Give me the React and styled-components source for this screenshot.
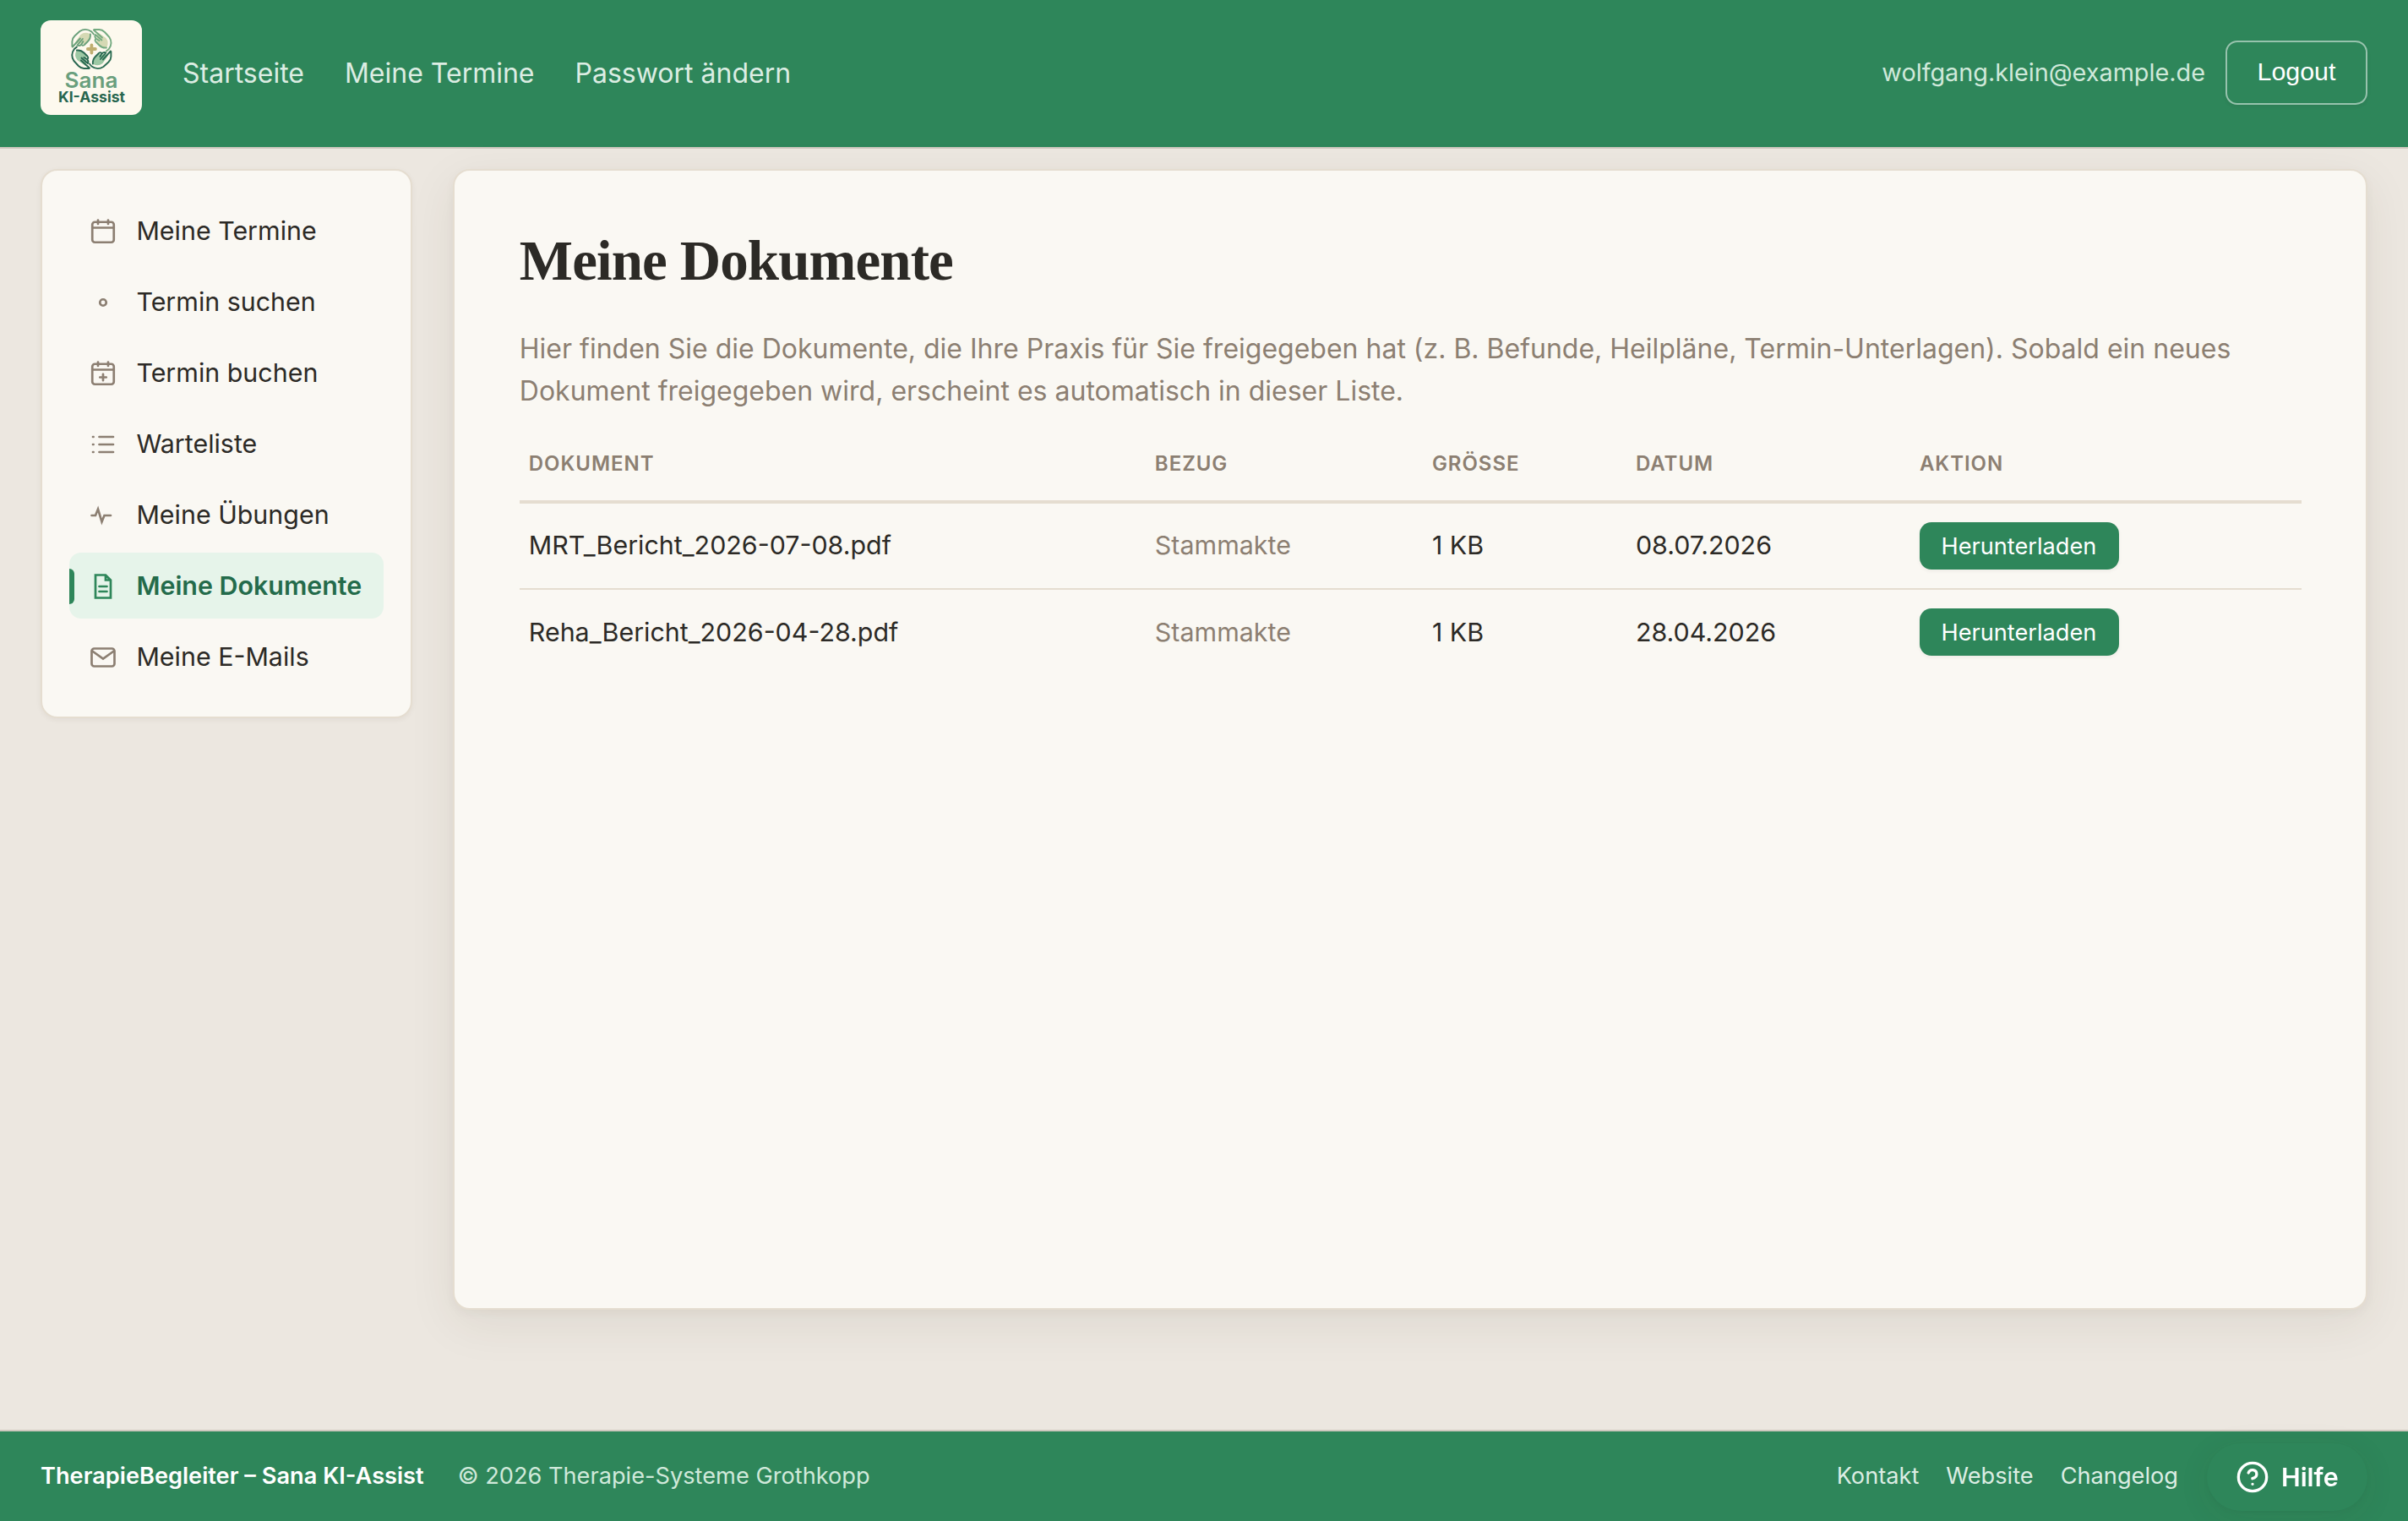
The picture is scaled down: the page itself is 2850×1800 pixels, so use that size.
import React from 'react';
import styled, { createGlobalStyle, css } from 'styled-components';

const GlobalStyle = createGlobalStyle`
  *, *::before, *::after { box-sizing: border-box; }
  body {
    margin: 0;
    background: #ece7e0;
    color: #2c2a26;
    font-family: Inter, sans-serif;
    font-size: 32px;
  }
  a { color: inherit; text-decoration: none; }
  button { font-family: inherit; margin: 0; }
`;

const Page = styled.div`
  display: flex;
  flex-direction: column;
  height: 1800px;
  overflow: hidden;
`;

const Header = styled.header`
  flex: none;
  display: flex;
  align-items: flex-start;
  justify-content: space-between;
  height: 176px;
  padding: 24px 48px 0;
  background: #2e865a;
  border-bottom: 2px solid #cfc8bf;
`;

const HeaderGroup = styled.div`
  display: flex;
  align-items: center;
  height: 124px;
  gap: ${(p) => p.$gap}px;
`;

const LogoLink = styled.a`
  align-self: flex-start;
  display: block;
  width: 120px;
  height: 112px;
  border-radius: 12px;
  overflow: hidden;
  background: #fdf9ee;
  svg { display: block; }
`;

const NavLink = styled.a`
  padding-top: 2px;
  font-size: 32px;
  line-height: 50px;
  color: #dcede3;
`;

const Email = styled.span`
  font-size: 28.8px;
  line-height: 46px;
  color: #d0e9da;
`;

const LogoutButton = styled.button`
  width: 168px;
  height: 76px;
  padding: 0 0 3px;
  border: 2px solid rgba(255, 255, 255, 0.5);
  border-radius: 14px;
  background: transparent;
  box-shadow: 0 2px 4px rgba(44, 42, 38, 0.08);
  color: #fff;
  font-family: 'Liberation Sans', Arial, sans-serif;
  font-size: 30.4px;
`;

const Body = styled.div`
  flex: 1;
  display: flex;
  align-items: flex-start;
  gap: 48px;
  padding: 24px 48px 0;
`;

const panel = css`
  border: 2px solid #e5ddd0;
  border-radius: 20px;
  background: #faf8f3;
`;

const Sidebar = styled.nav`
  ${panel}
  flex: none;
  display: flex;
  flex-direction: column;
  gap: 6px;
  width: 440px;
  padding: 32px;
  box-shadow: 0 2px 6px rgba(60, 50, 30, 0.06);
`;

const SideItem = styled.a`
  position: relative;
  display: flex;
  align-items: center;
  gap: 21.4px;
  height: 78px;
  padding-left: 22px;
  border-radius: 14px;
  font-size: 30.4px;
  white-space: nowrap;
  color: ${(p) => (p.$active ? '#246b4b' : '#2c2a26')};
  font-weight: ${(p) => (p.$active ? 600 : 400)};
  background: ${(p) => (p.$active ? '#e6f4ea' : 'transparent')};
  svg {
    flex: none;
    margin-top: 2px;
    color: ${(p) => (p.$active ? '#2e865a' : '#8c7f72')};
  }
  &::before {
    content: '';
    display: ${(p) => (p.$active ? 'block' : 'none')};
    position: absolute;
    left: 0;
    top: 18.5px;
    width: 6px;
    height: 42px;
    border-radius: 0 6px 6px 0;
    background: #2e865a;
  }
`;

const Main = styled.main`
  ${panel}
  flex: 1;
  height: 1350px;
  padding: 68px 76px 0 76.8px;
  box-shadow: 0 16px 56px rgba(60, 50, 30, 0.08), 0 4px 12px rgba(60, 50, 30, 0.04);
`;

const Title = styled.h1`
  margin: 0;
  font-family: 'Liberation Serif', serif;
  font-size: 67px;
  font-weight: 700;
  line-height: 76px;
  letter-spacing: -0.9px;
  color: #2c2a26;
`;

const Intro = styled.p`
  margin: 42px 0 0;
  font-size: 32px;
  line-height: 50px;
  color: #8c7f72;
`;

const Table = styled.table`
  width: 100%;
  margin-top: 10px;
  table-layout: fixed;
  border-collapse: separate;
  border-spacing: 0;
`;

const Col = styled.col`
  width: ${(p) => p.$w}px;
`;

const Th = styled.th`
  height: 98px;
  padding: 7px 11px 0;
  border-bottom: 4px solid #e5ddd0;
  text-align: left;
  font-size: 24px;
  font-weight: 600;
  letter-spacing: 0.96px;
  color: #8c7f72;
`;

const Td = styled.td`
  height: 102px;
  padding: 0 11px ${(p) => (p.$last || p.$action ? 0 : 2)}px;
  border-bottom: 2px solid ${(p) => (p.$last ? 'transparent' : '#e5ddd0')};
  font-size: 30.4px;
  line-height: 48px;
  color: ${(p) => (p.$muted ? '#8c7f72' : '#2c2a26')};
`;

const DownloadButton = styled.button`
  display: flex;
  align-items: center;
  justify-content: center;
  width: 236px;
  height: 56px;
  padding: 0 1px 0 0;
  border: 0;
  border-radius: 14px;
  background: #2e865a;
  box-shadow: 0 2px 4px rgba(44, 42, 38, 0.06);
  color: #fff;
  font-size: 27.2px;
`;

const Footer = styled.footer`
  flex: none;
  display: flex;
  align-items: center;
  justify-content: space-between;
  height: 108px;
  padding: 0 272px 2px 48px;
  border-top: 2px solid #cfc8bf;
  background: #2e865a;
  color: #d0e9da;
  font-size: 27.2px;
`;

const FooterGroup = styled.div`
  display: flex;
  gap: ${(p) => p.$gap}px;
`;

const FooterLink = styled.a`
  color: #dcede3;
`;

const Brand = styled.strong`
  font-weight: 600;
  color: #fff;
`;

const HelpButton = styled.button`
  position: fixed;
  right: 48px;
  bottom: 12px;
  display: flex;
  align-items: center;
  gap: 14px;
  width: 190px;
  height: 80px;
  padding: 0 0 0 34px;
  border: 0;
  border-radius: 40px;
  background: #2e865a;
  box-shadow: 0 8px 40px rgba(60, 50, 30, 0.07), 0 2px 8px rgba(60, 50, 30, 0.05);
  color: #fff;
  font-size: 30.4px;
  font-weight: 600;
`;

const icons = {
  calendar: (
    <>
      <rect x="3.5" y="4.5" width="17" height="16" rx="2" />
      <path d="M3.5 9h17M8 3v3M16 3v3" />
    </>
  ),
  dot: <circle cx="12" cy="12" r="2.5" />,
  calendarPlus: (
    <>
      <rect x="3.5" y="4.5" width="17" height="16" rx="2" />
      <path d="M3.5 9h17M8 3v3M16 3v3M12 12.5v5M9.5 15h5" />
    </>
  ),
  list: <path d="M9 6h11M9 12h11M9 18h11M4 6h.4M4 12h.4M4 18h.4" />,
  pulse: <path d="M3 12h3l2-5 3 10 2-5h5" />,
  file: <path d="M6 3h8l4 4v14H6zM14 3v4h4M9 12h6M9 16h6" />,
  mail: (
    <>
      <rect x="3" y="5" width="18" height="14" rx="2" />
      <path d="M3.5 7l8.5 6 8.5-6" />
    </>
  ),
};

function Icon({ name }) {
  const round = name !== 'file' && name !== 'pulse' && name !== 'mail';
  return (
    <svg
      width="36"
      height="36"
      viewBox="0 0 24 24"
      fill="none"
      stroke="currentColor"
      strokeWidth="1.8"
      strokeLinecap="round"
      strokeLinejoin={round ? 'round' : 'miter'}
    >
      {icons[name]}
    </svg>
  );
}

function Hand({ angle, fill, stroke }) {
  return (
    <g transform={`rotate(${angle})`}>
      <path d="M-20 -7 L-13 -17 Q-8 -21 -2 -18 L-2.500 -11 L-8 -5.500 L-11.500 -7 L-14 -6 Z" fill={fill} />
      <path
        d="M-23 -3 V-9 Q-23 -12.500 -20 -15.500 L-14 -21 Q-7 -25.500 0 -20.500 L2.500 -17.500 M-1.500 -17.500 Q-1 -12.500 -4.500 -9 L-8.500 -5 Q-11 -3 -12 -5.500 L-10 -9 M-12 -5.500 Q-14.500 -3 -17 -4.500 L-10.500 -12 M-22.500 -2.500 L-13.500 -12.500"
        fill="none"
        stroke={stroke}
        strokeWidth="1.900"
        strokeLinecap="round"
        strokeLinejoin="round"
      />
    </g>
  );
}

function Logo() {
  return (
    <svg width="120" height="112" viewBox="0 0 120 112">
      <g transform="translate(60.400 34)">
        <Hand angle={0} fill="#d5d9b4" stroke="#6aa07a" />
        <Hand angle={90} fill="#d5d9b4" stroke="#74aa80" />
        <Hand angle={180} fill="#9cc8a4" stroke="#2b6c52" />
        <Hand angle={270} fill="#9cc8a4" stroke="#27664f" />
        <path d="M0 -4.500v9M-4.500 0h9" stroke="#bfae70" strokeWidth="3.800" strokeLinecap="round" />
      </g>
      <text
        x="60"
        y="80"
        textAnchor="middle"
        textLength="63"
        lengthAdjust="spacingAndGlyphs"
        fontFamily="Inter, sans-serif"
        fontSize="25"
        fontWeight="600"
        fill="#6a9f7d"
      >
        Sana
      </text>
      <text
        x="60.500"
        y="97"
        textAnchor="middle"
        textLength="79"
        lengthAdjust="spacingAndGlyphs"
        fontFamily="Inter, sans-serif"
        fontSize="18"
        fontWeight="700"
        fill="#27664f"
      >
        KI-Assist
      </text>
    </svg>
  );
}

const sideItems = [
  ['calendar', 'Meine Termine'],
  ['dot', 'Termin suchen'],
  ['calendarPlus', 'Termin buchen'],
  ['list', 'Warteliste'],
  ['pulse', 'Meine Übungen'],
  ['file', 'Meine Dokumente'],
  ['mail', 'Meine E-Mails'],
];

const columns = [
  ['DOKUMENT', 741],
  ['BEZUG', 328],
  ['GRÖSSE', 241],
  ['DATUM', 336],
  ['AKTION', 463],
];

const documents = [
  { name: 'MRT_Bericht_2026-07-08.pdf', ref: 'Stammakte', size: '1 KB', date: '08.07.2026' },
  { name: 'Reha_Bericht_2026-04-28.pdf', ref: 'Stammakte', size: '1 KB', date: '28.04.2026' },
];

export default function App() {
  return (
    <Page>
      <GlobalStyle />
      <Header>
        <HeaderGroup $gap={48}>
          <LogoLink href="#"><Logo /></LogoLink>
          <NavLink href="#">Startseite</NavLink>
          <NavLink href="#">Meine Termine</NavLink>
          <NavLink href="#">Passwort ändern</NavLink>
        </HeaderGroup>
        <HeaderGroup $gap={24}>
          <Email>wolfgang.klein@example.de</Email>
          <LogoutButton>Logout</LogoutButton>
        </HeaderGroup>
      </Header>
      <Body>
        <Sidebar>
          {sideItems.map(([icon, label]) => (
            <SideItem key={label} href="#" $active={icon === 'file'}>
              <Icon name={icon} />
              {label}
            </SideItem>
          ))}
        </Sidebar>
        <Main>
          <Title>Meine Dokumente</Title>
          <Intro>
            Hier finden Sie die Dokumente, die Ihre Praxis für Sie freigegeben hat (z. B. Befunde,
            Heilpläne, Termin-Unterlagen). Sobald ein neues Dokument freigegeben wird, erscheint es
            automatisch in dieser Liste.
          </Intro>
          <Table>
            <colgroup>
              {columns.map(([label, w]) => <Col key={label} $w={w} />)}
            </colgroup>
            <thead>
              <tr>{columns.map(([label]) => <Th key={label}>{label}</Th>)}</tr>
            </thead>
            <tbody>
              {documents.map((d, i) => {
                const last = i === documents.length - 1;
                return (
                  <tr key={d.name}>
                    <Td $last={last}>{d.name}</Td>
                    <Td $last={last} $muted>{d.ref}</Td>
                    <Td $last={last}>{d.size}</Td>
                    <Td $last={last}>{d.date}</Td>
                    <Td $last={last} $action><DownloadButton>Herunterladen</DownloadButton></Td>
                  </tr>
                );
              })}
            </tbody>
          </Table>
        </Main>
      </Body>
      <Footer>
        <FooterGroup $gap={40}>
          <Brand>TherapieBegleiter – Sana KI-Assist</Brand>
          <span>© 2026 Therapie-Systeme Grothkopp</span>
        </FooterGroup>
        <FooterGroup $gap={32}>
          <FooterLink href="#">Kontakt</FooterLink>
          <FooterLink href="#">Website</FooterLink>
          <FooterLink href="#">Changelog</FooterLink>
        </FooterGroup>
      </Footer>
      <HelpButton>
        <svg width="40" height="40" viewBox="0 0 24 24" fill="none" stroke="currentColor" strokeWidth="2" strokeLinecap="round" strokeLinejoin="round">
          <circle cx="12" cy="12" r="10" />
          <path d="M9.090 9a3 3 0 0 1 5.830 1c0 2-3 3-3 3M12 17h.01" />
        </svg>
        Hilfe
      </HelpButton>
    </Page>
  );
}
